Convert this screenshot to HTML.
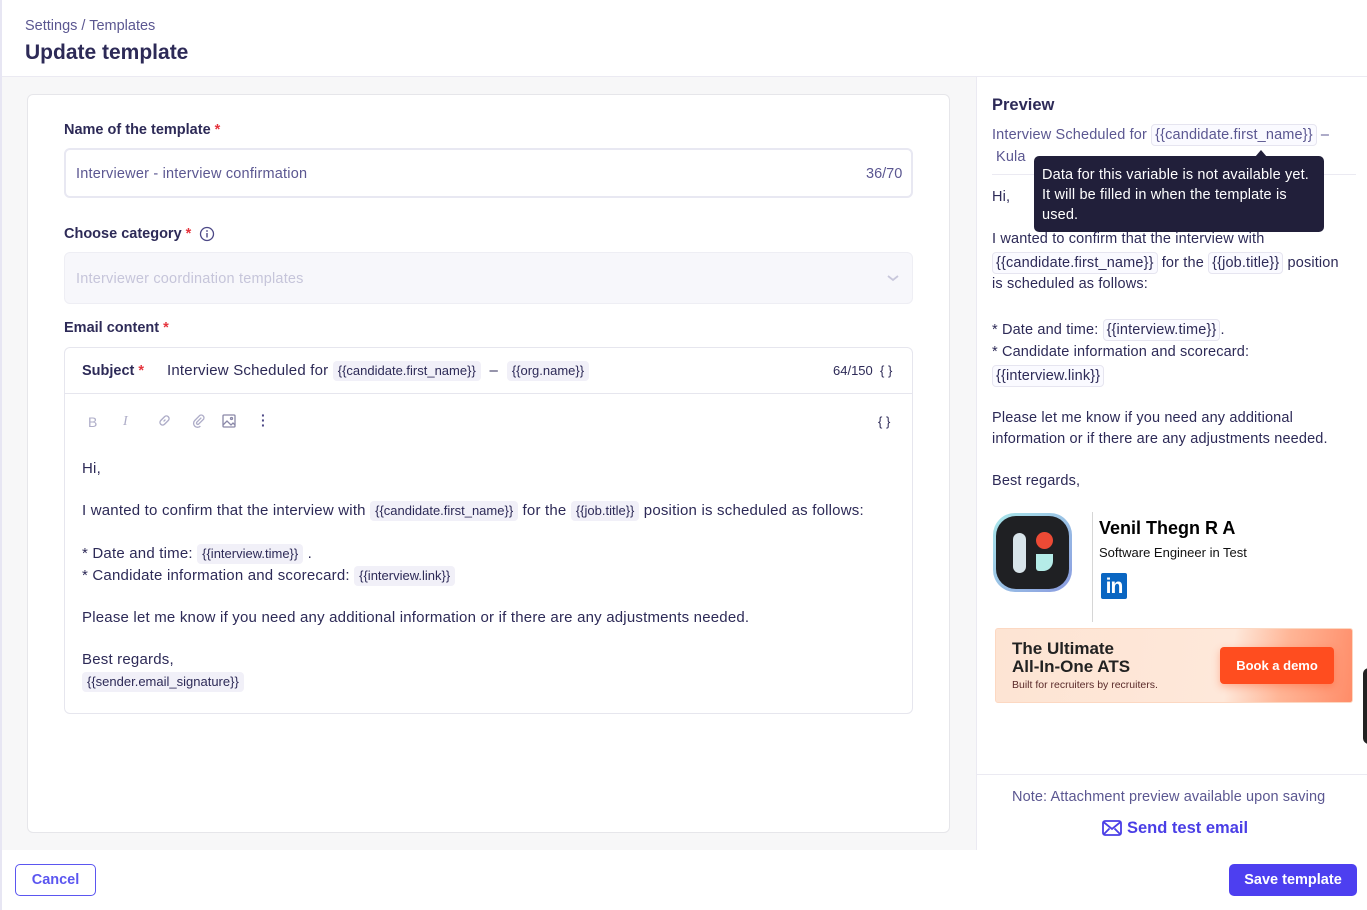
<!DOCTYPE html>
<html><head><meta charset="utf-8"><style>
*{box-sizing:border-box;margin:0;padding:0}
body{width:1367px;height:910px;position:relative;overflow:hidden;background:#fff;font-family:"Liberation Sans",sans-serif;color:#2d2a57}
.a{position:absolute;white-space:nowrap}
.tag{display:inline-block;background:#f1f0f8;border-radius:4px;padding:1px 5px;font-size:13px;color:#2d2a57;line-height:18px;letter-spacing:0}
.ptag{display:inline-block;border:1px solid #e6e5f0;border-radius:4px;padding:0 3px;line-height:20px;background:#fafaff}
.req{color:#e5343d}
.lbl{font-weight:bold;font-size:14.5px;color:#2d2a57}
.et{font-size:15px;color:#2d2a57;letter-spacing:0.2px}
.pt{font-size:14.5px;color:#2d2a57;letter-spacing:0.15px}
</style></head><body>
<div class="a" style="left:0;top:0;width:2px;height:910px;background:#e7e6f3"></div>
<div class="a" style="left:25px;top:18px;font-size:14.5px;color:#5b5791">Settings / Templates</div>
<div class="a" style="left:25px;top:41px;font-size:21px;font-weight:bold;color:#2d2a57">Update template</div>
<div class="a" style="left:2px;top:76px;width:1365px;height:1px;background:#ebeaf2"></div>
<div class="a" style="left:2px;top:77px;width:974px;height:773px;background:#f7f7f8"></div>
<div class="a" style="left:27px;top:94px;width:923px;height:739px;background:#fff;border:1px solid #e6e6ea;border-radius:6px"></div>
<div class="a lbl" style="left:64px;top:122px">Name of the template <span class="req">*</span></div>
<div class="a" style="left:64px;top:148px;width:849px;height:50px;border:2px solid #e8e8f2;border-radius:6px"></div>
<div class="a" style="left:76px;top:166px;font-size:14.5px;color:#5b5791;letter-spacing:0.2px">Interviewer - interview confirmation</div>
<div class="a" style="left:866px;top:166px;font-size:14.5px;color:#5b5791">36/70</div>
<div class="a lbl" style="left:64px;top:226px">Choose category <span class="req">*</span></div>
<svg class="a" style="left:199px;top:226px" width="16" height="16" viewBox="0 0 16 16"><circle cx="8" cy="8" r="6.5" fill="none" stroke="#4c4886" stroke-width="1.3"/><circle cx="8" cy="5" r="0.9" fill="#4c4886"/><path d="M8 7v4.5" stroke="#4c4886" stroke-width="1.4"/></svg>
<div class="a" style="left:64px;top:252px;width:849px;height:52px;background:#f7f7fb;border:1px solid #eeeef4;border-radius:6px"></div>
<div class="a" style="left:76px;top:271px;font-size:14.5px;color:#c6c5da;letter-spacing:0.2px">Interviewer coordination templates</div>
<svg class="a" style="left:886px;top:273px" width="14" height="10" viewBox="0 0 14 10"><path d="M2 3l5 4 5-4" fill="none" stroke="#c8c7db" stroke-width="1.8"/></svg>
<div class="a lbl" style="left:64px;top:320px">Email content <span class="req">*</span></div>
<div class="a" style="left:64px;top:347px;width:849px;height:367px;border:1px solid #e6e6ee;border-radius:6px"></div>
<div class="a" style="left:65px;top:393px;width:847px;height:1px;background:#e6e6ee"></div>
<div class="a" style="left:82px;top:363px;font-size:14.5px;font-weight:bold">Subject <span class="req">*</span></div>
<div class="a et" style="left:167px;top:361px">Interview Scheduled for <span class="tag">{{candidate.first_name}}</span> &nbsp;–&nbsp; <span class="tag">{{org.name}}</span></div>
<div class="a" style="left:833px;top:363px;font-size:13px">64/150 &nbsp;{ }</div>
<div class="a" style="left:88px;top:414px;font-size:14px;color:#aeadc8">B</div>
<div class="a" style="left:123px;top:414px;font-size:14px;color:#aeadc8;font-style:italic;font-family:'Liberation Serif',serif">I</div>
<svg class="a" style="left:157px;top:413px" width="15" height="15" viewBox="0 0 16 16" fill="none" stroke="#aeadc8" stroke-width="1.5"><path d="M7 9l2-2M6 6L4 8a2.5 2.5 0 0 0 4 4l2-2M10 10l2-2a2.5 2.5 0 0 0-4-4L6 6"/></svg>
<svg class="a" style="left:191px;top:413px" width="15" height="15" viewBox="0 0 16 16" fill="none" stroke="#aeadc8" stroke-width="1.4"><path d="M11 5l-5 5a1.5 1.5 0 0 0 2 2l5.5-5.5a3 3 0 0 0-4-4L4 8a4 4 0 0 0 6 6"/></svg>
<svg class="a" style="left:222px;top:414px" width="14" height="14" viewBox="0 0 14 14" fill="none" stroke="#8a88a8" stroke-width="1.3"><rect x="1" y="1" width="12" height="12" rx="1"/><path d="M1 11l4-4 4 4 2-2 2 2"/><circle cx="9.5" cy="4.5" r="1"/></svg>
<div class="a" style="left:261px;top:413px;font-size:14px;color:#4c4886;font-weight:bold;line-height:5px">·<br>·<br>·</div>
<div class="a" style="left:878px;top:414px;font-size:13px">{ }</div>
<div class="a et" style="left:82px;top:460px">Hi,</div>
<div class="a et" style="left:82px;top:501px">I wanted to confirm that the interview with <span class="tag">{{candidate.first_name}}</span> for the <span class="tag">{{job.title}}</span> position is scheduled as follows:</div>
<div class="a et" style="left:82px;top:544px">* Date and time: <span class="tag">{{interview.time}}</span> .</div>
<div class="a et" style="left:82px;top:566px">* Candidate information and scorecard: <span class="tag">{{interview.link}}</span></div>
<div class="a et" style="left:82px;top:609px">Please let me know if you need any additional information or if there are any adjustments needed.</div>
<div class="a et" style="left:82px;top:651px">Best regards,</div>
<div class="a" style="left:82px;top:672px"><span class="tag">{{sender.email_signature}}</span></div>
<div class="a" style="left:976px;top:77px;width:1px;height:773px;background:#ebeaf2"></div>
<div class="a" style="left:992px;top:96px;font-size:16.5px;font-weight:bold">Preview</div>
<div class="a pt" style="left:992px;top:124px;color:#5b5791">Interview Scheduled for <span class="ptag">{{candidate.first_name}}</span> –</div>
<div class="a pt" style="left:996px;top:149px;color:#5b5791">Kula</div>
<div class="a" style="left:992px;top:174px;width:364px;height:1px;background:#ebeaf2"></div>
<div class="a pt" style="left:992px;top:189px">Hi,</div>
<div class="a pt" style="left:992px;top:231px">I wanted to confirm that the interview with</div>
<div class="a pt" style="left:992px;top:252px"><span class="ptag">{{candidate.first_name}}</span> for the <span class="ptag">{{job.title}}</span> position</div>
<div class="a pt" style="left:992px;top:276px">is scheduled as follows:</div>
<div class="a pt" style="left:992px;top:319px">* Date and time: <span class="ptag">{{interview.time}}</span>.</div>
<div class="a pt" style="left:992px;top:344px">* Candidate information and scorecard:</div>
<div class="a pt" style="left:992px;top:365px"><span class="ptag">{{interview.link}}</span></div>
<div class="a pt" style="left:992px;top:410px">Please let me know if you need any additional</div>
<div class="a pt" style="left:992px;top:431px">information or if there are any adjustments needed.</div>
<div class="a pt" style="left:992px;top:473px">Best regards,</div>
<div class="a" style="left:1034px;top:156px;width:290px;height:76px;background:#211f3a;border-radius:5px"></div>
<div class="a" style="left:1255px;top:150px;width:0;height:0;border-left:6px solid transparent;border-right:6px solid transparent;border-bottom:7px solid #211f3a"></div>
<div class="a" style="left:1042px;top:165px;font-size:14.5px;color:#fff;line-height:20px;letter-spacing:0.15px">Data for this variable is not available yet.<br>It will be filled in when the template is<br>used.</div>
<div class="a" style="left:993px;top:513px;width:79px;height:79px;border-radius:22px;background:linear-gradient(135deg,#a9e8ea,#8a9ae0);padding:3px"><div style="width:100%;height:100%;background:#1f2023;border-radius:20px;position:relative">
<div style="position:absolute;left:17px;top:17px;width:13px;height:40px;border-radius:7px;background:#d8e4ea"></div>
<div style="position:absolute;left:40px;top:16px;width:17px;height:17px;border-radius:50%;background:#ec4a35"></div>
<div style="position:absolute;left:40px;top:38px;width:17px;height:17px;border-radius:0 0 10px 3px;background:#b5ece8"></div></div></div>
<div class="a" style="left:1092px;top:512px;width:1px;height:110px;background:#d6d6d6"></div>
<div class="a" style="left:1099px;top:518px;font-size:18px;font-weight:bold;color:#000">Venil Thegn R A</div>
<div class="a" style="left:1099px;top:545px;font-size:13px;color:#111">Software Engineer in Test</div>
<div class="a" style="left:1101px;top:573px;width:26px;height:26px;background:#0a66c2;border-radius:2px;color:#fff;font-weight:bold;font-size:21px;line-height:27px;text-align:center;letter-spacing:-1px">in</div>
<div class="a" style="left:995px;top:628px;width:358px;height:75px;border-radius:3px;background:linear-gradient(100deg,#fde4d3 0%,#fee8da 65%,#ffb596 80%,#ff8c68 100%);border:1px solid #fcd8c2"></div>
<div class="a" style="left:1012px;top:640px;font-size:17px;font-weight:bold;color:#222;line-height:18px">The Ultimate<br>All-In-One ATS</div>
<div class="a" style="left:1012px;top:679px;font-size:10.5px;color:#5a2a2a">Built for recruiters by recruiters.</div>
<div class="a" style="left:1220px;top:647px;width:114px;height:37px;border-radius:4px;background:#ff4d1f;box-shadow:0 3px 8px rgba(255,80,30,.35);color:#fff;font-weight:bold;font-size:13px;line-height:37px;text-align:center">Book a demo</div>
<div class="a" style="left:1363px;top:668px;width:6px;height:76px;border-radius:6px 0 0 6px;background:#222"></div>
<div class="a" style="left:977px;top:774px;width:390px;height:1px;background:#ebeaf2"></div>
<div class="a" style="left:1012px;top:789px;font-size:14.5px;color:#5b5791;letter-spacing:0.1px">Note: Attachment preview available upon saving</div>
<svg class="a" style="left:1102px;top:820px" width="20" height="16" viewBox="0 0 20 16" fill="none" stroke="#4a3ee6" stroke-width="1.8"><rect x="1" y="1" width="18" height="14" rx="2"/><path d="M1.5 2l8.5 7 8.5-7M1.5 14.5l6-6M18.5 14.5l-6-6"/></svg>
<div class="a" style="left:1127px;top:819px;font-size:16.5px;font-weight:bold;color:#4a3ee6">Send test email</div>
<div class="a" style="left:15px;top:864px;width:81px;height:32px;border:1.5px solid #5b56f0;border-radius:5px;color:#5b56f0;font-size:14.5px;font-weight:bold;text-align:center;line-height:31px">Cancel</div>
<div class="a" style="left:1229px;top:864px;width:128px;height:32px;border-radius:5px;background:#4d3ff0;color:#fff;font-size:14.5px;font-weight:bold;text-align:center;line-height:32px">Save template</div>
</body></html>
